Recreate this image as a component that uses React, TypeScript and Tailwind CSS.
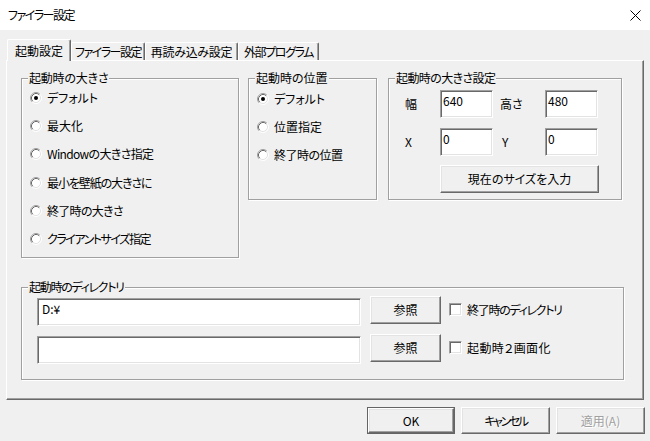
import React from "react";

function Radio({ checked }: { checked?: boolean }) {
  return (
    <svg width="12" height="12" viewBox="0 0 12 12" className="shrink-0">
      <circle cx="6" cy="6" r="5" fill="#fff" />
      <path d="M2.11 9.89 A5.5 5.5 0 0 1 9.89 2.11" stroke="#a0a0a0" fill="none" />
      <path d="M9.89 2.11 A5.5 5.5 0 0 1 2.11 9.89" stroke="#ffffff" fill="none" />
      <path d="M2.82 9.18 A4.5 4.5 0 0 1 9.18 2.82" stroke="#696969" fill="none" />
      <path d="M9.18 2.82 A4.5 4.5 0 0 1 2.82 9.18" stroke="#e3e3e3" fill="none" />
      {checked && <circle cx="6" cy="6" r="2" fill="#000" />}
    </svg>
  );
}

function Check() {
  return (
    <div className="w-[13px] h-[13px] shrink-0 bg-white border border-t-[#a0a0a0] border-l-[#a0a0a0] border-r-white border-b-white shadow-[inset_1px_1px_0_#696969,inset_-1px_-1px_0_#e3e3e3]" />
  );
}

function Btn({
  children,
  className = "",
  disabled,
  def,
}: {
  children: React.ReactNode;
  className?: string;
  disabled?: boolean;
  def?: boolean;
}) {
  const inner = (
    <div
      className={`flex items-center justify-center w-full h-full bg-[#f0f0f0] border border-t-white border-l-white border-r-[#696969] border-b-[#696969] shadow-[inset_-1px_-1px_0_#a0a0a0,inset_1px_1px_0_#e3e3e3] whitespace-nowrap ${
        disabled ? "text-[#a0a0a0] [text-shadow:1px_1px_0_#fff]" : "text-black"
      }`}
    >
      {children}
    </div>
  );
  if (def) {
    return <div className={`border border-[#646464] ${className}`}>{inner}</div>;
  }
  return <div className={className}>{inner}</div>;
}

function Input({ value, className = "", padL = "pl-[2px]" }: { value?: string; className?: string; padL?: string }) {
  return (
    <div
      className={`bg-white border border-t-[#a0a0a0] border-l-[#a0a0a0] border-r-white border-b-white shadow-[inset_1px_1px_0_#696969,inset_-1px_-1px_0_#e3e3e3] pt-[2px] leading-[16px] ${padL} ${className}`}
    >
      {value}
    </div>
  );
}

function Group({
  label,
  labelClass = "",
  className = "",
  children,
}: {
  label: string;
  labelClass?: string;
  className?: string;
  children?: React.ReactNode;
}) {
  return (
    <div
      className={`relative shrink-0 border border-[#a0a0a0] shadow-[inset_1px_1px_0_#fff,1px_1px_0_#fff] ${className}`}
    >
      <span className={`absolute left-[6px] top-[-9px] bg-[#f0f0f0] px-[1px] leading-[16px] whitespace-nowrap ${labelClass}`}>
        {label}
      </span>
      {children}
    </div>
  );
}

function RadioRow({ label, checked, tc = "" }: { label: string; checked?: boolean; tc?: string }) {
  return (
    <div className="flex items-center h-[28.2px] gap-[5px] whitespace-nowrap">
      <Radio checked={checked} />
      <span className={`leading-[16px] ${tc}`}>{label}</span>
    </div>
  );
}

function Tab({
  label,
  selected,
  className = "",
  tc = "",
}: {
  label: string;
  selected?: boolean;
  className?: string;
  tc?: string;
}) {
  return (
    <div
      className={`flex items-center justify-center whitespace-nowrap bg-[#f0f0f0] border-t border-l border-r border-t-white border-l-white border-r-[#696969] shadow-[inset_-1px_0_0_#a0a0a0] rounded-t-[2px] ${
        selected ? "h-[22px] -mb-[1px] relative z-10" : "h-[18px]"
      } ${className}`}
    >
      <span className={`leading-[16px] ${tc}`}>{label}</span>
    </div>
  );
}

export default function App() {
  return (
    <div className="w-[650px] h-[441px] bg-[#f0f0f0] text-black text-[12px] font-['Noto_Sans_CJK_JP',sans-serif] [font-feature-settings:'palt'] overflow-hidden">
      {/* title bar */}
      <div className="h-[30px] bg-white flex items-center pl-[8px]">
        <span className="leading-[16px] tracking-[-1.5px]">ファイラー設定</span>
        <svg width="11" height="11" viewBox="0 0 11 11" className="ml-auto mr-[9px]">
          <path d="M0.5 0.5 L10.5 10.5 M10.5 0.5 L0.5 10.5" stroke="#000" strokeWidth="1" />
        </svg>
      </div>

      {/* tabs */}
      <div className="mt-[9px] h-[21px] flex items-end ml-[7px]">
        <Tab label="起動設定" selected className="w-[64px]" />
        <Tab label="ファイラー設定" className="w-[74px]" tc="tracking-[-1.5px]" />
        <Tab label="再読み込み設定" className="w-[93px]" tc="tracking-[-0.3px]" />
        <Tab label="外部プログラム" className="w-[81px]" tc="tracking-[-1.4px]" />
      </div>

      {/* tab sheet */}
      <div className="ml-[6px] w-[638px] h-[340px] border border-t-white border-l-white border-r-[#696969] border-b-[#696969] shadow-[inset_-1px_-1px_0_#a0a0a0]">
        <div className="flex items-start ml-[14px] mt-[17px]">
          <Group label="起動時の大きさ" className="w-[218px] h-[180px]" labelClass="tracking-[-0.2px]">
            <div className="pt-[5px] pl-[8px] flex flex-col">
              <RadioRow label="デフォルト" checked />
              <RadioRow label="最大化" />
              <RadioRow label="Windowの大きさ指定" tc="tracking-[-0.65px]" />
              <RadioRow label="最小を壁紙の大きさに" tc="tracking-[-1.1px]" />
              <RadioRow label="終了時の大きさ" tc="tracking-[-0.7px]" />
              <RadioRow label="クライアントサイズ指定" tc="tracking-[-1.45px]" />
            </div>
          </Group>
          <Group label="起動時の位置" className="w-[129px] h-[122px] ml-[9px]">
            <div className="pt-[6px] pl-[8px] flex flex-col">
              <RadioRow label="デフォルト" checked />
              <RadioRow label="位置指定" />
              <RadioRow label="終了時の位置" tc="tracking-[-0.5px]" />
            </div>
          </Group>
          <Group label="起動時の大きさ設定" className="w-[234px] h-[122px] ml-[11px]" labelClass="tracking-[-0.6px]">
            <div className="pt-[11px] pl-[16px] flex flex-col">
              <div className="flex items-center h-[28px]">
                <span className="w-[35px] leading-[16px]">幅</span>
                <Input value="640" className="w-[53px] h-[28px]" />
                <span className="w-[52px] pl-[7px] leading-[16px]">高さ</span>
                <Input value="480" className="w-[53px] h-[28px]" />
              </div>
              <div className="flex items-center h-[28px] mt-[10px]">
                <span className="w-[35px] leading-[16px]">X</span>
                <Input value="0" className="w-[53px] h-[28px]" />
                <span className="w-[52px] pl-[9px] leading-[16px]">Y</span>
                <Input value="0" className="w-[53px] h-[28px]" />
              </div>
              <Btn className="w-[159px] h-[28px] mt-[9px] ml-[35px]">現在のサイズを入力</Btn>
            </div>
          </Group>
        </div>

        <Group
          label="起動時のディレクトリ"
          className="w-[603px] h-[93px] ml-[14px] mt-[29px]"
          labelClass="tracking-[-1.3px]"
        >
          <div className="pt-[8px] pl-[15px] flex flex-col gap-[8px]">
            <div className="flex items-start">
              <Input value="D:¥" padL="pl-[4px]" className="w-[324px] h-[28px] mt-[2px]" />
              <Btn className="w-[71px] h-[28px] ml-[9px]">参照</Btn>
              <div className="ml-[8px] mt-[7px]">
                <Check />
              </div>
              <div className="ml-[5px] h-[28px] flex items-center leading-[16px] whitespace-nowrap tracking-[-1.3px]">
                終了時のディレクトリ
              </div>
            </div>
            <div className="flex items-start">
              <Input className="w-[324px] h-[28px] mt-[2px]" />
              <Btn className="w-[71px] h-[28px] ml-[9px]">参照</Btn>
              <div className="ml-[8px] mt-[7px]">
                <Check />
              </div>
              <div className="ml-[5px] h-[28px] flex items-center leading-[16px] whitespace-nowrap tracking-[0.4px]">
                起動時２画面化
              </div>
            </div>
          </div>
        </Group>
      </div>

      {/* bottom buttons */}
      <div className="flex justify-end gap-[6px] pr-[5px] mt-[7px]">
        <Btn def className="w-[88px] h-[27px]">OK</Btn>
        <Btn className="w-[89px] h-[27px]">
          <span className="tracking-[-2.4px]">キャンセル</span>
        </Btn>
        <Btn disabled className="w-[89px] h-[27px]">適用(A)</Btn>
      </div>
    </div>
  );
}
